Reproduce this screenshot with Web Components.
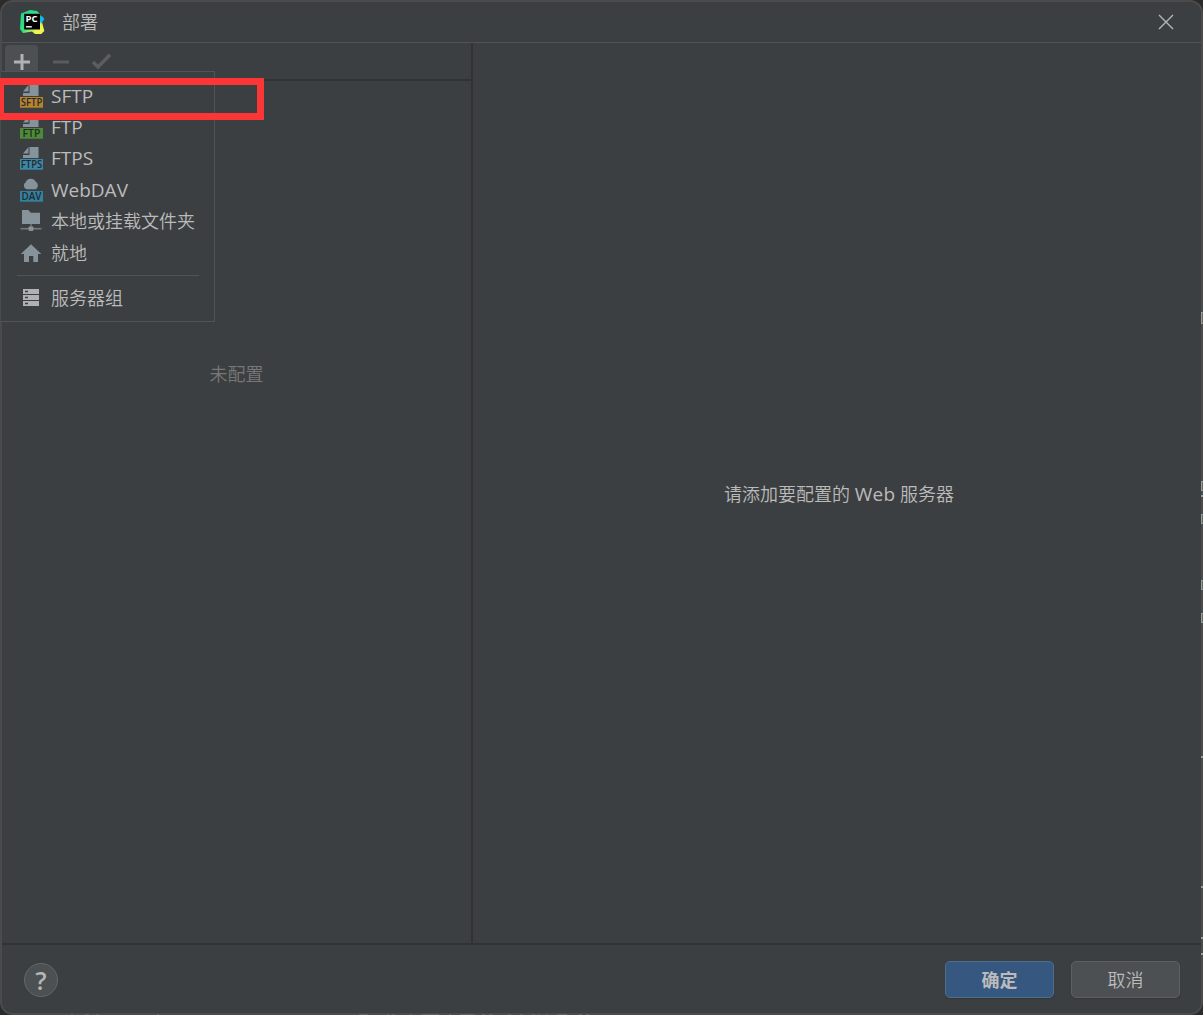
<!DOCTYPE html>
<html lang="zh-CN">
<head>
<meta charset="utf-8">
<title>部署</title>
<style>
html,body{margin:0;width:1203px;height:1015px;overflow:hidden;background:#2b2b2b}
body{font:18px/24px "Open Sans","Noto Sans CJK SC",sans-serif;color:#bbb}
</style>
</head>
<body>
<deploy-dialog></deploy-dialog>
<script>
const define = (name, html, setup) => customElements.define(name, class extends HTMLElement {
  constructor() {
    super();
    this.attachShadow({mode: 'open'}).innerHTML = html;
  }
  connectedCallback() { if (setup) setup(this, this.shadowRoot); }
});

const badge = (label, color, width, top) => `${top}
  <rect x="0" y="13" width="23" height="10.7" fill="${color}"/>
  <text x="11.5" y="22.2" text-anchor="middle" textLength="${width}" lengthAdjust="spacingAndGlyphs" font-family="Open Sans" font-weight="600" font-size="10.8" fill="#25292b">${label}</text>`;
const page = '<path d="M9.5 1H18.5V12H3V9H9.5Z M3 7.5 8.5 1V7.5Z" fill="#87939a"/>';
const icons = {
  sftp: badge('SFTP', '#b9832e', 21.5, page),
  ftp: badge('FTP', '#4d8b37', 18, page),
  ftps: badge('FTPS', '#3b87a5', 21.5, page),
  dav: badge('DAV', '#3182a0', 20, '<path d="M6.5 11.3A4 4 0 0 1 5.7 4.2 5.4 5.4 0 0 1 15.7 3.8 4.2 4.2 0 0 1 15.5 11.3Z" fill="#87939a"/>'),
  folder: '<path d="M2 1h6.3l2.5 2.8H20V15H2Z" fill="#87939a"/><path d="M.5 19.7h21" stroke="#87939a" stroke-width="1.6" opacity=".7"/><path d="M11 15v4M9 18h4v3.4H9Z" stroke="#87939a" fill="#87939a" stroke-width="1"/>',
  home: '<path d="M11 3.2 21.3 13H18v8h-4.7v-6H9v6H4v-8H.8Z" fill="#87939a"/>',
  servers: '<path d="M3 3h16v5H3Zm0 6h16v5H3Zm0 6h16v5H3Z" fill="#afb1b3"/><path d="M5 5.5h3M5 11.5h3M5 17.5h3" stroke="#3c3f41" stroke-width="1.3"/>'
};

define('ui-icon', `<style>:host{display:block;width:24px;height:24px;flex:none}svg{display:block}</style><svg width="24" height="24"></svg>`,
  (host, root) => { root.querySelector('svg').innerHTML = icons[host.getAttribute('name')]; });

define('menu-item', `<style>
:host{display:flex;align-items:center;height:31.4px;padding-left:19px;box-sizing:border-box;white-space:nowrap}
:host([latin]){font-size:19px;font-weight:400}
span{margin-left:7px}
</style><ui-icon></ui-icon><span><slot></slot></span>`,
  (host, root) => root.querySelector('ui-icon').replaceWith(Object.assign(document.createElement('template'), {innerHTML: `<ui-icon name="${host.getAttribute('icon')}"></ui-icon>`}).content));

define('add-menu', `<style>
:host{display:block;box-sizing:border-box;width:214px;height:251px;border:1px solid #515355;border-left:0;background:#3c3f41;padding-top:8px;font-weight:350}
hr{border:0;height:1px;background:#515355;margin:7px 15px 6px 16px}
</style>
<menu-item latin icon="sftp">SFTP</menu-item>
<menu-item latin icon="ftp">FTP</menu-item>
<menu-item latin icon="ftps">FTPS</menu-item>
<menu-item latin icon="dav">WebDAV</menu-item>
<menu-item icon="folder">本地或挂载文件夹</menu-item>
<menu-item icon="home">就地</menu-item>
<hr>
<menu-item icon="servers">服务器组</menu-item>`);

define('title-bar', `<style>
:host{display:flex;align-items:center;height:40px;border-bottom:1px solid #515355;padding:0 27px 0 18px;flex:none;font-weight:350}
span{margin-left:17px;flex:1}svg{display:block}
</style>
<svg width="25" height="25" viewBox="0 0 25 25">
<defs><linearGradient id="a" x1="0" y1="0" x2="1" y2="1"><stop offset="0" stop-color="#21d789"/><stop offset=".5" stop-color="#35df7e"/><stop offset=".72" stop-color="#d9f04f"/><stop offset="1" stop-color="#fcf84a"/></linearGradient></defs>
<path d="M1 3.5 10 0 17 1 20 4 24 20 21 24H15L12 21.5 3 23 0 19Z" fill="url(#a)"/>
<path d="M19 7 22 6 24.4 9 21 14Z" fill="#07b9f2"/><path d="M20 13 24.4 21 21 24H15V18Z" fill="#f0f251"/>
<path d="M4.2 3.8h15.8V19.5H4.2Z" fill="#000"/>
<text x="5.5" y="11.8" font-family="Open Sans" font-weight="700" font-size="9" textLength="12" lengthAdjust="spacingAndGlyphs" fill="#fff">PC</text><path d="M6 16.8h5.8" stroke="#fff" stroke-width="1.4"/></svg>
<span>部署</span>
<svg width="16" height="16"><path d="m1 1 14 14M15 1 1 15" stroke="#b4b6b8" stroke-width="1.4"/></svg>`);

define('tool-bar', `<style>
:host{display:flex;flex:none;border-bottom:2px solid #323232;box-sizing:border-box;height:38px;padding:2px 0 0 3px}
div{width:33px;height:33px;margin-right:6px;border-radius:4px}.on{background:#4c5052}
svg{display:block}
</style>
<div class="on"><svg width="33" height="33"><path d="M9 17h16M17 9v16" stroke="#afb1b3" stroke-width="3"/></svg></div>
<div><svg width="33" height="33"><path d="M9 17h16" stroke="#595b5d" stroke-width="3"/></svg></div>
<div><svg width="33" height="33"><path d="m10 17 5 5L27 9.8" fill="none" stroke="#5b5d5f" stroke-width="3.4"/></svg></div>`);

define('push-button', `<style>
:host{display:flex;align-items:center;justify-content:center;box-sizing:border-box;width:109px;height:37px;border:1.5px solid #5e6060;border-radius:5px;background:#4c5052;box-shadow:0 1px 1px #333638;font-weight:350}
:host([primary]){background:#365880;border-color:#4c708c;font-weight:700}
</style><span><slot></slot></span>`);

define('dialog-footer', `<style>
:host{display:flex;align-items:center;gap:17px;height:70px;flex:none;border-top:2px solid #323232;box-sizing:border-box;padding:1px 21px 0 22px}
.help{display:flex;align-items:center;justify-content:center;box-sizing:border-box;width:34px;height:34px;border:1.5px solid #646667;border-radius:50%;background:#4c5052;margin-right:auto;font:600 25px/30px "Open Sans",sans-serif;color:#b4b6b8}
</style><div class="help">?</div><push-button primary>确定</push-button><push-button>取消</push-button>`);

define('deploy-dialog', `<style>
:host{display:flex;flex-direction:column;box-sizing:border-box;width:1203px;height:1015px;border:2px solid #4b4b4b;border-radius:13px;background:#3c3f41;position:relative}
main{display:flex;flex:1;min-height:0}
.left{width:469px;border-right:2px solid #323232;display:flex;flex-direction:column;flex:none}
.empty{flex:1;text-align:center;padding-top:281px;color:#777;font-weight:350}
.right{flex:1;display:flex;align-items:center;justify-content:center;font-weight:350;padding:1px 0 0 4px;white-space:pre}
.right b{font-size:19px;font-weight:400;letter-spacing:.3px}
add-menu{position:absolute;left:-1px;top:69px}
.mark{position:absolute;left:-5px;top:76px;width:267px;height:42px;box-sizing:border-box;border:7px solid #fc3636}
.edge{position:absolute;right:-2px;width:1px;box-sizing:border-box;background:#6d675d;border:solid #929da0;border-width:1px 0 1px 1px;width:2px}
.under{position:absolute;bottom:-2px;height:1px;background:#606060}
</style>
<title-bar></title-bar>
<main><section class="left"><tool-bar></tool-bar><div class="empty">未配置</div></section>
<section class="right">请添加要配置的 <b>Web</b> 服务器</section></main>
<dialog-footer></dialog-footer>
<add-menu></add-menu><div class="mark"></div><div id="traces"></div>`,
  (host, root) => {
    root.querySelector('#traces').innerHTML =
      [[310,12],[479,10],[493,2],[512,10],[578,10],[611,10],[754,2],[884,2],[935,2],[951,2]].map(([y,h]) => `<i class="edge" style="top:${y}px;height:${h}px"></i>`).join('') +
      [[69,2],[83,4],[94,2],[155,2],[357,9],[385,2],[390,2],[408,2],[420,17],[447,2],[458,14],[480,3],[487,4],[506,3],[518,2],[530,3],[536,2],[544,2],[555,10],[577,3],[584,3]].map(([x,w]) => `<i class="under" style="left:${x}px;width:${w}px"></i>`).join('');
  });
</script>
</body>
</html>
